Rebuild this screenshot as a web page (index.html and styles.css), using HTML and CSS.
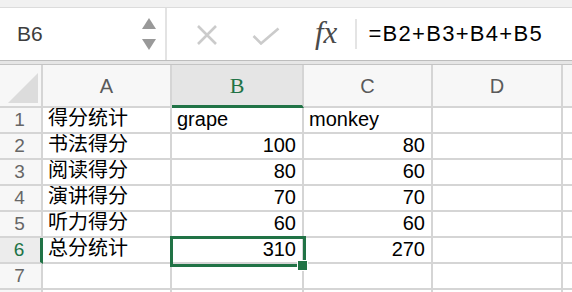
FILE: index.html
```html
<!DOCTYPE html>
<html lang="zh">
<head>
  <meta charset="UTF-8">
  <title>Sheet</title>
  <link rel="stylesheet" href="styles.css">
</head>
<body>
  <div class="app">
    <div class="top-strip"></div>

    <!-- formula bar -->
    <div class="formula-bar">
      <div class="name-box">
        <span class="cell-ref">B6</span>
        <div class="spinner">
          <span class="arrow-up"></span>
          <span class="arrow-down"></span>
        </div>
      </div>
      <div class="formula-area">
        <svg class="icon-cancel" width="22" height="22" viewBox="0 0 22 22">
          <path d="M2 2 L20 20 M20 2 L2 20" stroke="#cbcbcb" stroke-width="2.6" fill="none"/>
        </svg>
        <svg class="icon-ok" width="28" height="18" viewBox="0 0 28 18">
          <path d="M1.5 9 L9 16.5 L26.5 1.5" stroke="#cbcbcb" stroke-width="2.6" fill="none"/>
        </svg>
        <span class="fx">fx</span>
        <span class="fx-sep"></span>
        <span class="formula">=B2+B3+B4+B5</span>
      </div>
    </div>
    <div class="divider"></div>

    <!-- grid -->
    <div class="sheet">
      <div class="cell corner"><span class="corner-tri"></span></div>
      <div class="cell col-head">A</div>
      <div class="cell col-head active">B</div>
      <div class="cell col-head">C</div>
      <div class="cell col-head">D</div>
      <div class="cell col-head last"></div>

      <div class="cell row-head">1</div>
      <div class="cell text">得分统计</div>
      <div class="cell text">grape</div>
      <div class="cell text">monkey</div>
      <div class="cell"></div>
      <div class="cell last"></div>

      <div class="cell row-head">2</div>
      <div class="cell text">书法得分</div>
      <div class="cell num">100</div>
      <div class="cell num">80</div>
      <div class="cell"></div>
      <div class="cell last"></div>

      <div class="cell row-head">3</div>
      <div class="cell text">阅读得分</div>
      <div class="cell num">80</div>
      <div class="cell num">60</div>
      <div class="cell"></div>
      <div class="cell last"></div>

      <div class="cell row-head">4</div>
      <div class="cell text">演讲得分</div>
      <div class="cell num">70</div>
      <div class="cell num">70</div>
      <div class="cell"></div>
      <div class="cell last"></div>

      <div class="cell row-head">5</div>
      <div class="cell text">听力得分</div>
      <div class="cell num">60</div>
      <div class="cell num">60</div>
      <div class="cell"></div>
      <div class="cell last"></div>

      <div class="cell row-head active">6</div>
      <div class="cell text">总分统计</div>
      <div class="cell num">310</div>
      <div class="cell num">270</div>
      <div class="cell"></div>
      <div class="cell last"></div>

      <div class="cell row-head">7</div>
      <div class="cell"></div>
      <div class="cell"></div>
      <div class="cell"></div>
      <div class="cell"></div>
      <div class="cell last"></div>

      <div class="cell row-head"></div>
      <div class="cell"></div>
      <div class="cell"></div>
      <div class="cell"></div>
      <div class="cell"></div>
      <div class="cell last"></div>

      <!-- selected cell B6 -->
      <div class="selection"></div>
      <div class="fill-handle"></div>
    </div>
  </div>
</body>
</html>
```

FILE: styles.css
```css
body, html {
  margin: 0;
  padding: 0;
  width: 100%;
  height: 100%;
  overflow: hidden;
  background-color: #fff;
  font-family: "Liberation Sans", Arial, "Noto Sans CJK SC", sans-serif;
  color: #000;
}

.app {
  width: 572px;
  height: 292px;
  overflow: hidden;
}

.top-strip {
  height: 7px;
  background-color: #f1f1f1;
  border-bottom: 1px solid #dcdcdc;
}

/* formula bar */
.formula-bar {
  display: flex;
  height: 52px;
  border-bottom: 1px solid #bdbdbd;
}

.name-box {
  display: flex;
  align-items: center;
  width: 165px;
  border-right: 2px solid #e3e3e3;
}

.cell-ref {
  margin-left: 17px;
  font-size: 21px;
  color: #3d3d3d;
}

.spinner {
  display: flex;
  flex-direction: column;
  gap: 10px;
  margin-left: auto;
  margin-right: 9px;
}

.arrow-up,
.arrow-down {
  width: 0;
  height: 0;
  border-left: 7px solid transparent;
  border-right: 7px solid transparent;
}

.arrow-up {
  border-bottom: 11px solid #999;
}

.arrow-down {
  border-top: 11px solid #999;
}

.formula-area {
  display: flex;
  align-items: center;
  flex: 1;
}

.icon-cancel {
  margin-left: 29px;
  margin-top: 1px;
}

.icon-ok {
  margin-left: 34px;
  margin-top: 3px;
}

.fx {
  margin-left: 35px;
  font-family: "Liberation Serif", "Times New Roman", serif;
  font-style: italic;
  font-size: 31px;
  color: #4a4a4a;
  margin-top: -3px;
}

.fx-sep {
  width: 2px;
  height: 30px;
  margin-left: 18px;
  background-color: #e4e4e4;
}

.formula {
  margin-left: 11px;
  font-size: 22px;
  letter-spacing: 1.3px;
  color: #000;
}

.divider {
  height: 3px;
  background-color: #e6e6e6;
  border-bottom: 1px solid #c4c4c4;
}

/* grid */
.sheet {
  position: relative;
  display: grid;
  grid-template-columns: 43px 129px 132px 129px 130px 1fr;
  grid-template-rows: 43px repeat(8, 26px);
}

.cell {
  box-sizing: border-box;
  border-right: 2px solid #d5d5d5;
  border-bottom: 2px solid #d5d5d5;
  font-size: 20px;
  white-space: nowrap;
  overflow: hidden;
}

.cell.last {
  border-right: none;
}

.corner {
  position: relative;
  background-color: #f7f7f7;
}

.corner-tri {
  position: absolute;
  left: 8px;
  top: 8px;
  width: 0;
  height: 0;
  border-left: 30px solid transparent;
  border-bottom: 30px solid #dcdcdc;
}

.col-head {
  display: flex;
  align-items: center;
  justify-content: center;
  background-color: #f7f7f7;
  color: #5a5a5a;
  font-size: 20px;
  padding-top: 2px;
}

.col-head.active {
  background-color: #e5e5e5;
  color: #217346;
  font-family: "Liberation Serif", "Times New Roman", serif;
  font-size: 22px;
  border-bottom: 3px solid #217346;
}

.row-head {
  display: flex;
  align-items: center;
  justify-content: center;
  background-color: #f7f7f7;
  color: #666;
  font-size: 19px;
  padding-right: 2px;
}

.row-head.active {
  color: #217346;
  border-right: 3px solid #217346;
  background-color: #ececec;
}

.text {
  display: flex;
  align-items: flex-end;
  padding-left: 5px;
  padding-bottom: 1px;
}

.num {
  display: flex;
  align-items: flex-end;
  justify-content: flex-end;
  padding-right: 6px;
  padding-bottom: 1px;
}

.selection {
  position: absolute;
  left: 170px;
  top: 171px;
  width: 136px;
  height: 31px;
  box-sizing: border-box;
  border: 3px solid #217346;
}

.fill-handle {
  position: absolute;
  left: 297px;
  top: 195px;
  width: 9px;
  height: 9px;
  background-color: #217346;
  border: 1px solid #fff;
}
```
